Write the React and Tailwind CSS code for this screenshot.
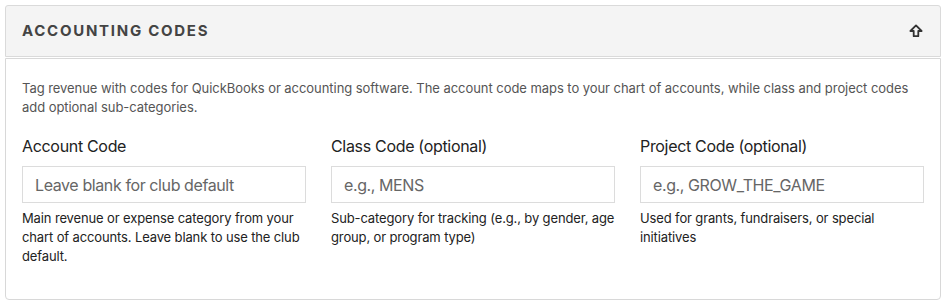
import React from 'react';

const font = { fontFamily: '"Inter", "Liberation Sans", sans-serif' };

const fields = [
  {
    label: 'Account Code',
    placeholder: 'Leave blank for club default',
    help: 'Main revenue or expense category from your chart of accounts. Leave blank to use the club default.',
  },
  {
    label: 'Class Code (optional)',
    placeholder: 'e.g., MENS',
    help: 'Sub-category for tracking (e.g., by gender, age group, or program type)',
  },
  {
    label: 'Project Code (optional)',
    placeholder: 'e.g., GROW_THE_GAME',
    help: 'Used for grants, fundraisers, or special initiatives',
  },
];

function ArrowUpOutline() {
  return (
    <svg width="14" height="14" viewBox="0 0 14 14" fill="none">
      <path
        d="M7 1.4 L12.6 7 H9.3 V12.2 H4.7 V7 H1.4 Z"
        stroke="#333"
        strokeWidth="1.8"
        strokeLinejoin="round"
      />
    </svg>
  );
}

export default function App() {
  return (
    <div className="bg-white p-[5px] pr-[4px]" style={font}>
      {/* header */}
      <div className="flex h-[52px] items-center justify-between rounded-t-[3px] border border-[#dadada] bg-[#f4f4f4] pl-[16px] pr-[17px]">
        <h2 className="text-[15px] font-bold tracking-[0.115em] text-[#444]">ACCOUNTING CODES</h2>
        <ArrowUpOutline />
      </div>

      {/* body */}
      <div className="mt-[1px] rounded-b-[4px] border border-[#d8d8d8] px-[16px] pb-[33px] pt-[20px] tracking-[-0.02em]">
        <p className="text-[13px] leading-[19px] tracking-[-0.004em] text-[#555]">
          Tag revenue with codes for QuickBooks or accounting software. The account code maps to your chart of accounts, while class and project codes add optional sub-categories.
        </p>

        <div className="mt-[17px] grid grid-cols-3 gap-x-[25px]">
          {fields.map((f) => (
            <div key={f.label}>
              <label className="block text-[16px] leading-[24px] text-[#222]">{f.label}</label>
              <input
                type="text"
                placeholder={f.placeholder}
                className="mt-[8px] block h-[37px] w-full border border-[#dcdcdc] bg-white px-[12px] text-[16px] tracking-[-0.025em] text-[#333] placeholder:text-[#666] outline-none"
                style={font}
              />
              <p className="mt-[6px] text-[13px] leading-[19px] tracking-[-0.01em] text-[#222]">{f.help}</p>
            </div>
          ))}
        </div>
      </div>
    </div>
  );
}
